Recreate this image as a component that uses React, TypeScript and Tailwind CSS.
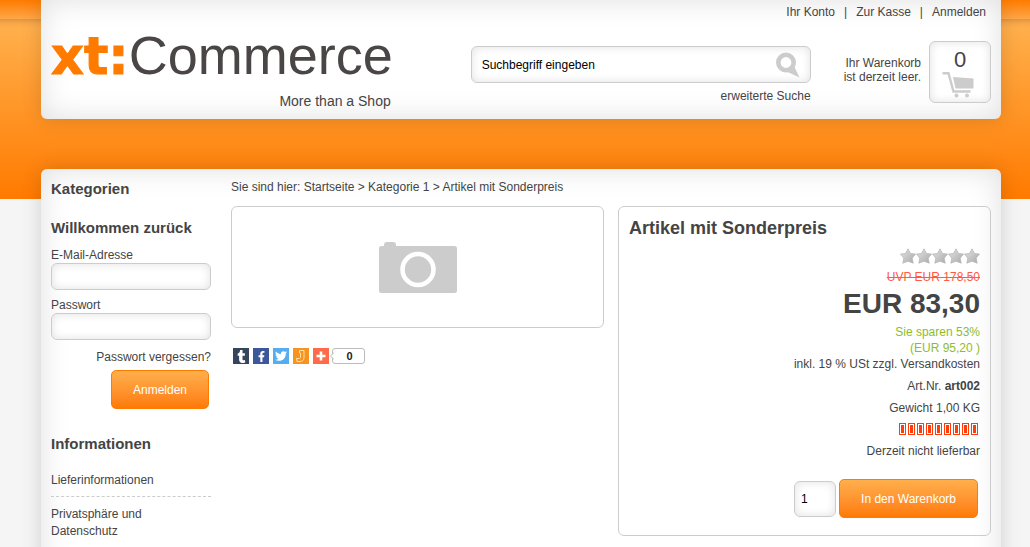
import type { ReactNode } from 'react';
import { FaFacebookF, FaTumblr, FaTwitter } from 'react-icons/fa';

const panel =
  'bg-white shadow-[0_0_20px_rgba(0,0,0,0.15),inset_0_0_30px_rgba(0,0,0,0.13)]';
const field =
  'rounded-md border border-[#ccc] bg-white text-xs text-black shadow-[inset_0_0_10px_rgba(0,0,0,0.12)] outline-none';
const orangeButton =
  'h-[39px] rounded-[5px] border border-[#ff7b00] bg-linear-to-b from-[#ffaf4b] to-[#ff7a00] px-[21px] text-xs text-white';

function SearchIcon() {
  return (
    <svg viewBox="0 0 24 26" className="h-[26px] w-6" aria-hidden="true">
      <circle cx="10" cy="10.5" r="7.700" fill="none" stroke="#ccc" strokeWidth="4.600" />
      <path d="M10.500 19.500L18 14L23.500 25.500Z" fill="#ccc" />
    </svg>
  );
}

function CartIcon() {
  return (
    <svg viewBox="0 0 32 26" className="mr-1 h-[26px] w-8" aria-hidden="true">
      <path d="M0.500 1.200H6.500L11.500 19.500H28.500" fill="none" stroke="#ccc" strokeWidth="2.400" />
      <path d="M11 5L31.500 6.500V16.500H13.500Z" fill="#ccc" />
      <circle cx="14.500" cy="23.500" r="2" fill="#ccc" />
      <circle cx="25" cy="23.500" r="2" fill="#ccc" />
    </svg>
  );
}

function CameraIcon() {
  return (
    <svg viewBox="0 0 78 51" className="mt-px h-[51px] w-[78px]" aria-hidden="true">
      <rect y="4" width="78" height="47" rx="2.500" fill="#ccc" />
      <rect x="5" width="12" height="10" rx="3" fill="#ccc" />
      <circle cx="39" cy="27.500" r="15.500" fill="none" stroke="#fff" strokeWidth="4.600" />
    </svg>
  );
}

function Star() {
  return (
    <svg viewBox="0 0 16 16" className="size-4" aria-hidden="true">
      <defs>
        <linearGradient id="star" x1="0" y1="0" x2="1" y2="1">
          <stop offset="0" stopColor="#e4e4e4" />
          <stop offset="1" stopColor="#a8a8a8" />
        </linearGradient>
      </defs>
      <path
        d="M8 0.800L10.500 5.400L15.600 6.100L12.200 10L13.200 15.200L8 13.200L2.800 15.200L3.800 10L0.400 6.100L5.500 5.400Z"
        fill="url(#star)"
        stroke="#b4b4b4"
        strokeWidth="0.700"
      />
    </svg>
  );
}

function Share({ label, color, children }: { label: string; color: string; children: ReactNode }) {
  return (
    <a href="#" aria-label={label} className={`flex size-4 items-center justify-center text-white ${color}`}>
      {children}
    </a>
  );
}

function Header() {
  return (
    <header className={`${panel} flex h-[119px] justify-between rounded-b-md px-[10px]`}>
      <a href="#" className="flex flex-col items-end pt-6">
        <span className="flex items-baseline text-[54px] leading-[62px] text-[#4a4646]">
          <span className="font-['DejaVu_Sans'] text-[51px] font-bold text-[#ff7b00] [-webkit-text-stroke:1px_#ff7b00]">
            xt:
          </span>
          <span>Commerce</span>
        </span>
        <span className="mr-[2px] text-sm leading-[26px]">More than a Shop</span>
      </a>
      <div className="flex flex-col items-end">
        <nav className="flex gap-[9px] pt-1 pr-[5px] leading-4">
          <a href="#">Ihr Konto</a>
          <span>|</span>
          <a href="#">Zur Kasse</a>
          <span>|</span>
          <a href="#">Anmelden</a>
        </nav>
        <div className="flex pt-[21px]">
          <form className="flex w-[340px] flex-col items-end pt-[5px]">
            <div className={`${field} flex h-[37px] w-full items-center px-[10px]`}>
              <input
                aria-label="Suchbegriff"
                defaultValue="Suchbegriff eingeben"
                className="min-w-0 flex-1 bg-transparent outline-none"
              />
              <button type="button" aria-label="Suchen">
                <SearchIcon />
              </button>
            </div>
            <a href="#" className="mt-[5px] leading-4">
              erweiterte Suche
            </a>
          </form>
          <p className="ml-[33px] pt-[15px] text-right leading-[14px]">
            Ihr Warenkorb
            <br />
            ist derzeit leer.
          </p>
          <a
            href="#"
            aria-label="Warenkorb"
            className={`${field} ml-2 flex h-[62px] w-[62px] flex-col items-center pt-[6px]`}
          >
            <span className="text-[22px] leading-6 text-[#444]">0</span>
            <CartIcon />
          </a>
        </div>
      </div>
    </header>
  );
}

function Sidebar() {
  return (
    <aside className="flex w-40 shrink-0 flex-col">
      <h2 className="text-[15px] leading-5 font-bold">Kategorien</h2>
      <h2 className="mt-[19px] text-[15px] leading-5 font-bold">Willkommen zurück</h2>
      <form className="flex flex-col">
        <label htmlFor="email" className="mt-[10px] leading-[15px]">
          E-Mail-Adresse
        </label>
        <input id="email" type="email" className={`${field} h-[27px] px-2`} />
        <label htmlFor="password" className="mt-2 leading-[15px]">
          Passwort
        </label>
        <input id="password" type="password" className={`${field} h-[27px] px-2`} />
        <a href="#" className="mt-[9px] self-end leading-4">
          Passwort vergessen?
        </a>
        <button type="button" className={`${orangeButton} mt-[5px] mr-[2px] self-end`}>
          Anmelden
        </button>
      </form>
      <h2 className="mt-[25px] text-[15px] leading-5 font-bold">Informationen</h2>
      <ul className="mt-[10px] leading-[17px]">
        <li className="pt-2 pb-[7px]">
          <a href="#">Lieferinformationen</a>
        </li>
        <li className="border-t border-dashed border-[#ccc] pt-[9px]">
          <a href="#">
            Privatsphäre und
            <br />
            Datenschutz
          </a>
        </li>
      </ul>
    </aside>
  );
}

function ShareBar() {
  return (
    <div className="mt-5 ml-[2px] flex gap-1">
      <Share label="Tumblr" color="bg-[#35465c]">
        <FaTumblr size={13} />
      </Share>
      <Share label="Facebook" color="bg-[#3b5998]">
        <FaFacebookF size={11} />
      </Share>
      <Share label="Twitter" color="bg-[#55acee]">
        <FaTwitter size={12} />
      </Share>
      <Share label="Jappy" color="bg-[#f7931e]">
        <svg viewBox="0 0 16 16" className="size-4" aria-hidden="true">
          <path
            d="M6.500 2.500H11V9.500C11 12 9.500 13.500 7 13.500H4L3.500 10.500H6C7 10.500 7.500 10 7.500 9V5H6.500Z"
            fill="none"
            stroke="#ffe0a8"
            strokeWidth="1"
          />
        </svg>
      </Share>
      <div className="flex">
        <Share label="Mehr" color="bg-[#ff6b4a]">
          <svg viewBox="0 0 16 16" className="size-4" aria-hidden="true">
            <path d="M8 3.500V12.500M3.500 8H12.500" stroke="#fff" strokeWidth="2.600" />
          </svg>
        </Share>
        <span className="relative ml-[3px] flex h-4 w-[33px] items-center justify-center rounded-[3px] border border-[#bbb] bg-white pl-[2px] text-[11px] font-bold text-[#222]">
          <svg viewBox="0 0 4 8" className="absolute top-[3px] -left-[3px] h-2 w-1" aria-hidden="true">
            <path d="M4 0.500L0.500 4L4 7.500" fill="#fff" stroke="#bbb" />
          </svg>
          0
        </span>
      </div>
    </div>
  );
}

function Product() {
  return (
    <section className="flex flex-col rounded-md border border-[#ccc] px-[10px] pt-[10px] pb-[17px] text-right leading-4">
      <h1 className="text-left text-lg leading-[22px] font-bold">Artikel mit Sonderpreis</h1>
      <div className="mt-[9px] flex justify-end">
        {[0, 1, 2, 3, 4].map((i) => (
          <Star key={i} />
        ))}
      </div>
      <p className="mt-[5px] text-[#ff5a43] line-through">UVP EUR 178,50</p>
      <p className="mt-[3px] text-[28px] leading-8 font-bold">EUR 83,30</p>
      <p className="mt-1 text-[#8fbc2b]">
        Sie sparen 53%
        <br />
        (EUR 95,20 )
      </p>
      <p>
        inkl. 19 % USt zzgl. <a href="#">Versandkosten</a>
      </p>
      <p className="mt-[6px]">
        Art.Nr. <b>art002</b>
      </p>
      <p className="mt-[6px]">Gewicht 1,00 KG</p>
      <div className="mt-[7px] mr-[2px] flex justify-end gap-[2px]">
        {[0, 1, 2, 3, 4, 5, 6, 7, 8].map((i) => (
          <span key={i} className="h-3 w-[7px] border border-[#ff3c0a] p-px">
            <span className="block h-full bg-[#ff3c0a]" />
          </span>
        ))}
      </div>
      <p className="mt-2">Derzeit nicht lieferbar</p>
      <form className="mt-5 mr-[2px] flex items-center justify-end gap-[3px]">
        <input aria-label="Menge" defaultValue="1" className={`${field} h-9 w-[42px] px-[6px]`} />
        <button type="button" className={orangeButton}>
          In den Warenkorb
        </button>
      </form>
    </section>
  );
}

export default function App() {
  return (
    <div className="flex min-h-screen flex-col overflow-hidden bg-[linear-gradient(#ff7b00_0,#ffa748_19px,#dd9540_19px,#f8a548_23px,#ffaf4b_28px,#ff7a00_199px,#f5f5f5_199px)] pr-[29px] pl-[41px] font-['Liberation_Sans',Arial,sans-serif] text-xs text-[#444]">
      <Header />
      <main className={`${panel} mt-[50px] -mb-10 flex grow gap-5 rounded-t-md px-[10px] pt-[10px] pb-12`}>
        <Sidebar />
        <div className="flex min-w-0 grow flex-col">
          <nav className="leading-4">
            Sie sind hier: <a href="#">Startseite</a> &gt; <a href="#">Kategorie 1</a> &gt;{' '}
            <a href="#">Artikel mit Sonderpreis</a>
          </nav>
          <div className="mt-[11px] grid grid-cols-2 items-start gap-[14px]">
            <div>
              <div className="flex h-[122px] items-center justify-center rounded-md border border-[#ccc]">
                <CameraIcon />
              </div>
              <ShareBar />
            </div>
            <Product />
          </div>
        </div>
      </main>
    </div>
  );
}
